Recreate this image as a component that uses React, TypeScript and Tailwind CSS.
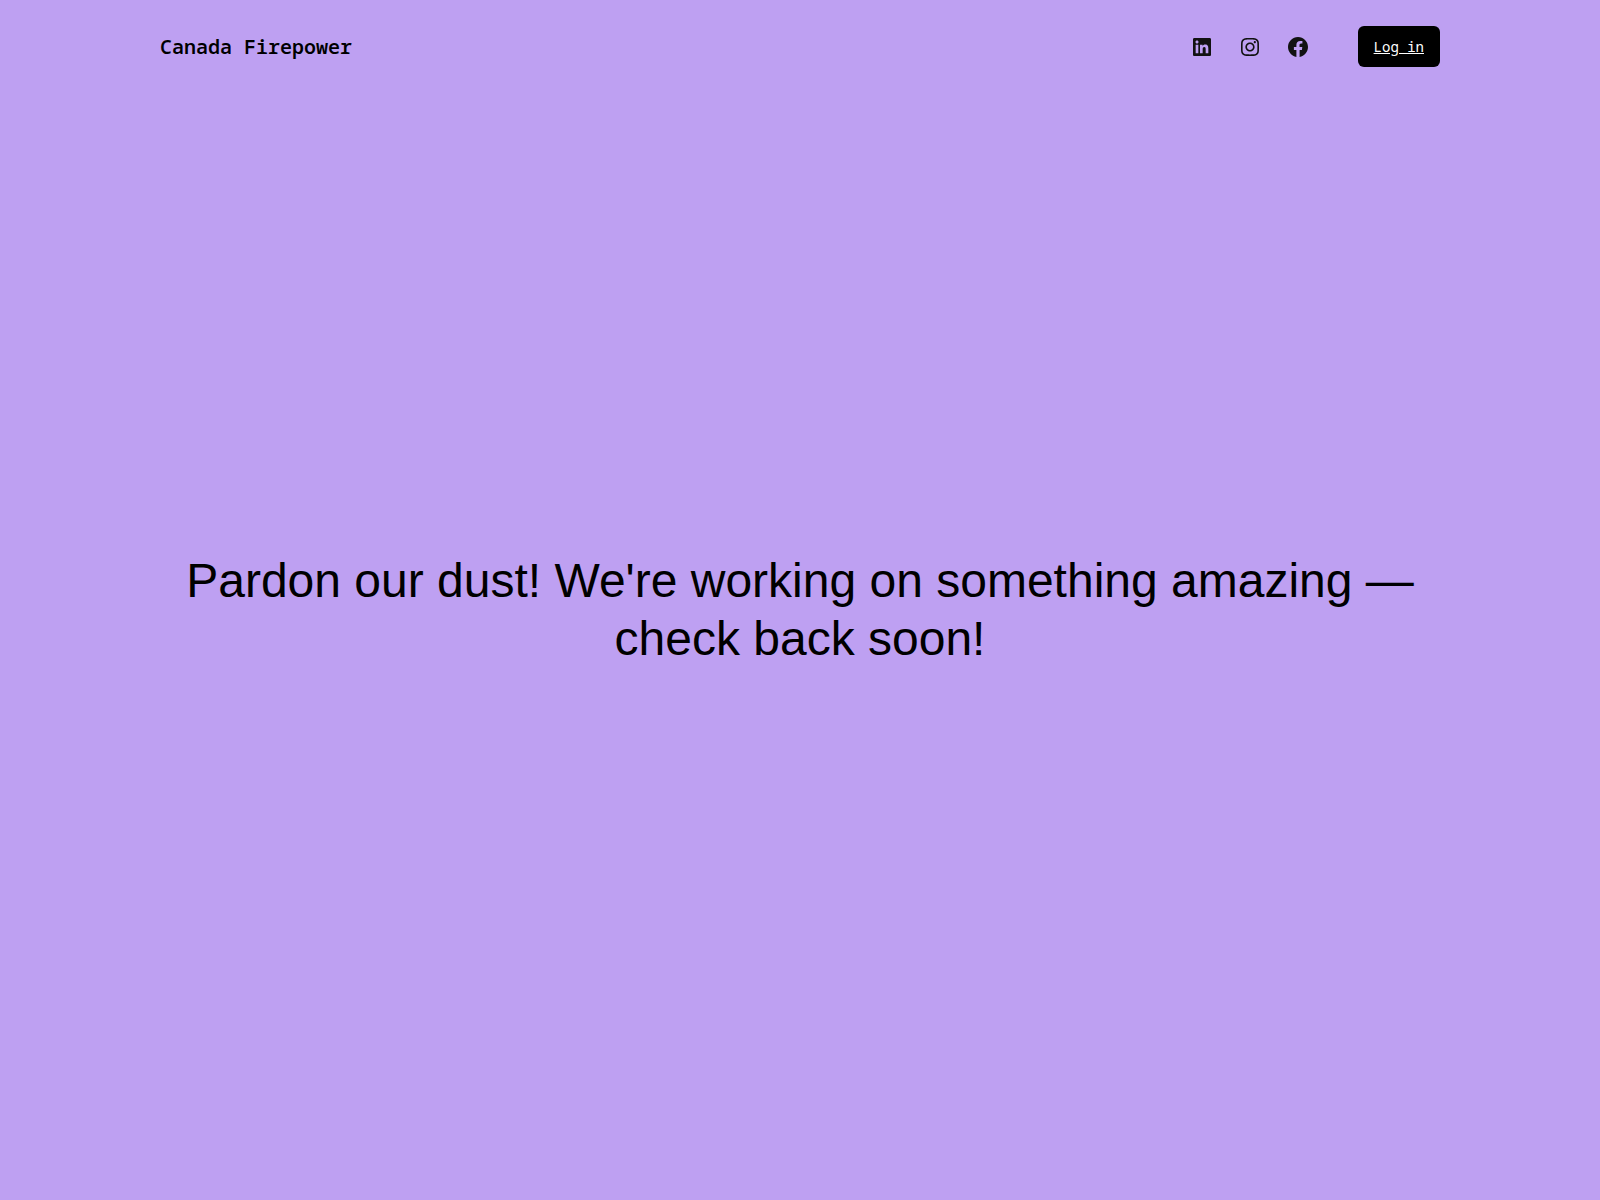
const socials = [
  {
    name: "LinkedIn",
    href: "https://www.linkedin.com",
    path: "M19.7,3H4.3C3.582,3,3,3.582,3,4.3v15.4C3,20.418,3.582,21,4.3,21h15.4c0.718,0,1.3-0.582,1.3-1.3V4.3 C21,3.582,20.418,3,19.7,3z M8.339,18.338H5.667v-8.59h2.672V18.338z M7.004,8.574c-0.857,0-1.549-0.694-1.549-1.548 c0-0.855,0.691-1.548,1.549-1.548c0.854,0,1.547,0.694,1.547,1.548C8.551,7.881,7.858,8.574,7.004,8.574z M18.339,18.338h-2.669 v-4.177c0-0.996-0.017-2.278-1.387-2.278c-1.389,0-1.601,1.086-1.601,2.206v4.249h-2.667v-8.59h2.559v1.174h0.037 c0.356-0.675,1.227-1.387,2.526-1.387c2.703,0,3.203,1.779,3.203,4.092V18.338z",
  },
  {
    name: "Instagram",
    href: "https://www.instagram.com",
    path: "M12,4.622c2.403,0,2.688,0.009,3.637,0.052c0.877,0.04,1.354,0.187,1.671,0.31c0.42,0.163,0.72,0.358,1.035,0.673 c0.315,0.315,0.51,0.615,0.673,1.035c0.123,0.317,0.27,0.794,0.31,1.671c0.043,0.949,0.052,1.234,0.052,3.637 s-0.009,2.688-0.052,3.637c-0.04,0.877-0.187,1.354-0.31,1.671c-0.163,0.42-0.358,0.72-0.673,1.035 c-0.315,0.315-0.615,0.51-1.035,0.673c-0.317,0.123-0.794,0.27-1.671,0.31c-0.949,0.043-1.233,0.052-3.637,0.052 s-2.688-0.009-3.637-0.052c-0.877-0.04-1.354-0.187-1.671-0.31c-0.42-0.163-0.72-0.358-1.035-0.673 c-0.315-0.315-0.51-0.615-0.673-1.035c-0.123-0.317-0.27-0.794-0.31-1.671C4.631,14.688,4.622,14.403,4.622,12 s0.009-2.688,0.052-3.637c0.04-0.877,0.187-1.354,0.31-1.671c0.163-0.42,0.358-0.72,0.673-1.035 c0.315-0.315,0.615-0.51,1.035-0.673c0.317-0.123,0.794-0.27,1.671-0.31C9.312,4.631,9.597,4.622,12,4.622 M12,3 C9.556,3,9.249,3.01,8.289,3.054C7.331,3.098,6.677,3.25,6.105,3.472C5.513,3.702,5.011,4.01,4.511,4.511 c-0.5,0.5-0.808,1.002-1.038,1.594C3.25,6.677,3.098,7.331,3.054,8.289C3.01,9.249,3,9.556,3,12c0,2.444,0.01,2.751,0.054,3.711 c0.044,0.958,0.196,1.612,0.418,2.185c0.23,0.592,0.538,1.094,1.038,1.594c0.5,0.5,1.002,0.808,1.594,1.038 c0.572,0.222,1.227,0.375,2.185,0.418C9.249,20.99,9.556,21,12,21s2.751-0.01,3.711-0.054c0.958-0.044,1.612-0.196,2.185-0.418 c0.592-0.23,1.094-0.538,1.594-1.038c0.5-0.5,0.808-1.002,1.038-1.594c0.222-0.572,0.375-1.227,0.418-2.185 C20.99,14.751,21,14.444,21,12s-0.01-2.751-0.054-3.711c-0.044-0.958-0.196-1.612-0.418-2.185c-0.23-0.592-0.538-1.094-1.038-1.594 c-0.5-0.5-1.002-0.808-1.594-1.038c-0.572-0.222-1.227-0.375-2.185-0.418C14.751,3.01,14.444,3,12,3L12,3z M12,7.378 c-2.552,0-4.622,2.069-4.622,4.622S9.448,16.622,12,16.622s4.622-2.069,4.622-4.622S14.552,7.378,12,7.378z M12,15 c-1.657,0-3-1.343-3-3s1.343-3,3-3s3,1.343,3,3S13.657,15,12,15z M16.804,6.116c-0.596,0-1.08,0.484-1.08,1.08 s0.484,1.08,1.08,1.08c0.596,0,1.08-0.484,1.08-1.08S17.401,6.116,16.804,6.116z",
  },
  {
    name: "Facebook",
    href: "https://www.facebook.com",
    path: "M12 2C6.5 2 2 6.5 2 12c0 5 3.7 9.1 8.4 9.9v-7H7.9V12h2.5V9.8c0-2.5 1.5-3.9 3.8-3.9 1.1 0 2.2.2 2.2.2v2.5h-1.3c-1.2 0-1.6.8-1.6 1.6V12h2.8l-.4 2.9h-2.3v7C18.3 21.1 22 17 22 12c0-5.5-4.5-10-10-10z",
  },
];

function Header() {
  return (
    <header className="mx-auto flex w-4/5 items-center justify-between pt-[26px] font-['Noto_Sans_Mono','Liberation_Mono',monospace]">
      <a href="/" className="text-xl leading-7 font-semibold">
        Canada Firepower
      </a>

      <div className="flex items-center gap-12">
        <ul className="flex items-center gap-6">
          {socials.map((s) => (
            <li key={s.name}>
              <a href={s.href} aria-label={s.name} className="block text-[#121212]">
                <svg viewBox="0 0 24 24" className="size-6 fill-current" aria-hidden="true">
                  <path d={s.path} />
                </svg>
              </a>
            </li>
          ))}
        </ul>
        <a
          href="/login"
          className="rounded-md bg-black px-4 py-2.5 text-sm leading-[21px] text-white underline"
        >
          Log in
        </a>
      </div>
    </header>
  );
}

export default function App() {
  return (
    <div className="flex min-h-screen flex-col bg-[#bea0f2] text-black">
      <Header />
      <main className="mx-auto flex w-4/5 flex-1 items-center justify-center pb-12">
        <h1 className="text-center font-['Liberation_Sans',sans-serif] text-5xl leading-[58px]">
          Pardon our dust! We're working on something amazing — check back soon!
        </h1>
      </main>
    </div>
  );
}
